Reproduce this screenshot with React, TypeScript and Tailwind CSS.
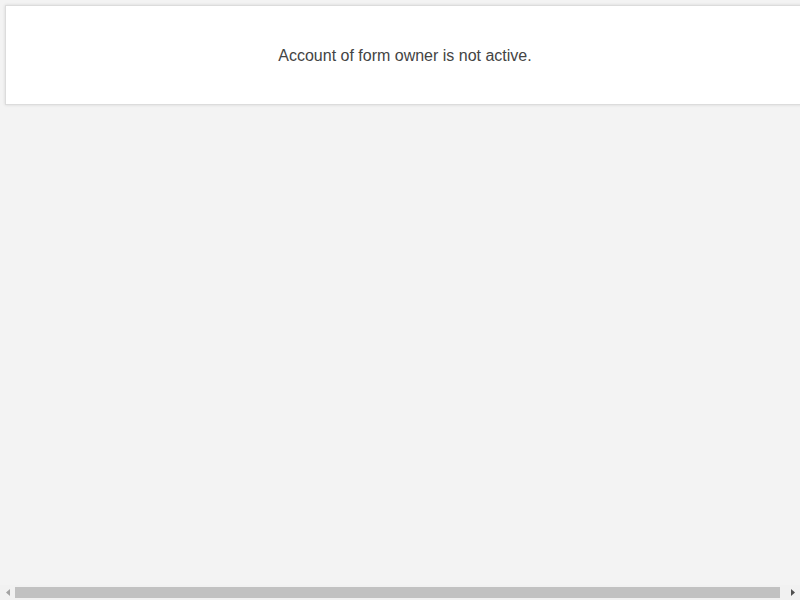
export default function App() {
  return (
    <div
      className="flex h-[600px] w-[800px] flex-col overflow-hidden bg-[#f3f3f3]"
      style={{ fontFamily: '"Liberation Sans", Arial, sans-serif' }}
    >
      <div className="flex-1 p-[5px]">
        <div className="flex h-[100px] w-[800px] items-center justify-center border border-[#dcdcdc] bg-white pt-[2px] shadow-[0_0_3px_rgba(0,0,0,0.12)]">
          <p className="text-[16px] text-[#444]">Account of form owner is not active.</p>
        </div>
      </div>
      {/* horizontal scrollbar */}
      <div className="flex h-[15px] items-center bg-[#f1f1f1]">
        <div className="flex w-[15px] justify-center">
          <svg width="4" height="7" viewBox="0 0 4 7">
            <path d="M4 0 L0 3.5 L4 7 Z" fill="#a3a3a3" />
          </svg>
        </div>
        <div className="h-[11px] flex-1 bg-[#c1c1c1]" />
        <div className="w-[5px]" />
        <div className="flex w-[15px] justify-center">
          <svg width="4" height="7" viewBox="0 0 4 7">
            <path d="M0 0 L4 3.5 L0 7 Z" fill="#505050" />
          </svg>
        </div>
      </div>
    </div>
  );
}
